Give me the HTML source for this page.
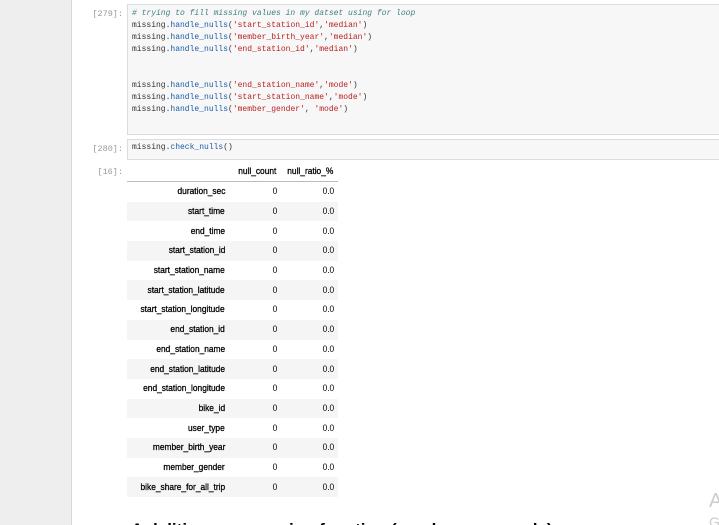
<!DOCTYPE html>
<html style="overflow:hidden;height:525px"><head><style>
body{margin:0;width:719px;height:525px;overflow:hidden;background:#fff;position:relative;font-family:"Liberation Sans",sans-serif}
.side{position:absolute;left:0;top:0;width:71px;height:525px;background:#eeeeee;border-right:1px solid #d8d8d8}
.prompt{position:absolute;font-family:"Liberation Mono",monospace;font-size:8.5px;color:#999;text-align:right;width:50px}
.box{position:absolute;left:127px;right:-2px;background:#f7f7f7;border:1px solid #dcdcdc;font-family:"Liberation Mono",monospace;font-size:8px;line-height:12px;color:#333;padding:0 0 0 4px;white-space:pre}
.c{color:#408080;font-style:italic}.s{color:#ba2121}.f{color:#1a5ea8}
table{position:absolute;left:127px;top:162px;border-collapse:collapse;font-size:9.5px;color:#000;table-layout:fixed;width:211px}
td,th{height:19.7px;padding:0 5px 0 0;text-align:right;white-space:nowrap;overflow:visible}
td{padding-right:4px}
th{font-weight:bold}
th span,td span{display:inline-block;transform:scaleX(0.88);transform-origin:right center}
th span{font-weight:normal;-webkit-text-stroke:0.3px #000}
thead th{border-bottom:1px solid #bbb;height:19px}
tbody tr:nth-child(even){background:#f5f5f5}
</style></head><body>
<div class="side"></div>
<div class="prompt" style="left:73px;top:9px">[279]:</div>
<div class="box" style="top:4px;height:126px;padding-top:3px"><span class="c"># trying to fill missing values in my datset using for loop</span>
missing.<span class="f">handle_nulls</span>(<span class="s">'start_station_id'</span>,<span class="s">'median'</span>)
missing.<span class="f">handle_nulls</span>(<span class="s">'member_birth_year'</span>,<span class="s">'median'</span>)
missing.<span class="f">handle_nulls</span>(<span class="s">'end_station_id'</span>,<span class="s">'median'</span>)


missing.<span class="f">handle_nulls</span>(<span class="s">'end_station_name'</span>,<span class="s">'mode'</span>)
missing.<span class="f">handle_nulls</span>(<span class="s">'start_station_name'</span>,<span class="s">'mode'</span>)
missing.<span class="f">handle_nulls</span>(<span class="s">'member_gender'</span>, <span class="s">'mode'</span>)</div>
<div class="prompt" style="left:73px;top:144px">[280]:</div>
<div class="box" style="top:139px;height:17px;padding-top:2px">missing.<span class="f">check_nulls</span>()</div>
<div class="prompt" style="left:73px;top:167px">[16]:</div>
<table>
<colgroup><col style="width:103px"><col style="width:51px"><col style="width:57px"></colgroup>
<thead><tr><th></th><th><span>null_count</span></th><th><span>null_ratio_%</span></th></tr></thead>
<tbody>
<tr><th><span>duration_sec</span></th><td><span>0</span></td><td><span>0.0</span></td></tr>
<tr><th><span>start_time</span></th><td><span>0</span></td><td><span>0.0</span></td></tr>
<tr><th><span>end_time</span></th><td><span>0</span></td><td><span>0.0</span></td></tr>
<tr><th><span>start_station_id</span></th><td><span>0</span></td><td><span>0.0</span></td></tr>
<tr><th><span>start_station_name</span></th><td><span>0</span></td><td><span>0.0</span></td></tr>
<tr><th><span>start_station_latitude</span></th><td><span>0</span></td><td><span>0.0</span></td></tr>
<tr><th><span>start_station_longitude</span></th><td><span>0</span></td><td><span>0.0</span></td></tr>
<tr><th><span>end_station_id</span></th><td><span>0</span></td><td><span>0.0</span></td></tr>
<tr><th><span>end_station_name</span></th><td><span>0</span></td><td><span>0.0</span></td></tr>
<tr><th><span>end_station_latitude</span></th><td><span>0</span></td><td><span>0.0</span></td></tr>
<tr><th><span>end_station_longitude</span></th><td><span>0</span></td><td><span>0.0</span></td></tr>
<tr><th><span>bike_id</span></th><td><span>0</span></td><td><span>0.0</span></td></tr>
<tr><th><span>user_type</span></th><td><span>0</span></td><td><span>0.0</span></td></tr>
<tr><th><span>member_birth_year</span></th><td><span>0</span></td><td><span>0.0</span></td></tr>
<tr><th><span>member_gender</span></th><td><span>0</span></td><td><span>0.0</span></td></tr>
<tr><th><span>bike_share_for_all_trip</span></th><td><span>0</span></td><td><span>0.0</span></td></tr>
</tbody></table>
<div style="position:absolute;left:131px;top:520px;font-size:17px;line-height:20px;font-weight:bold;color:#000;white-space:nowrap">A deliting or managing function (cumbersome code)</div>
<div style="position:absolute;left:709px;top:490px;font-size:20px;color:#ccc">A</div>
<div style="position:absolute;left:709px;top:514px;font-size:14px;color:#ccc">G</div>
</body></html>
